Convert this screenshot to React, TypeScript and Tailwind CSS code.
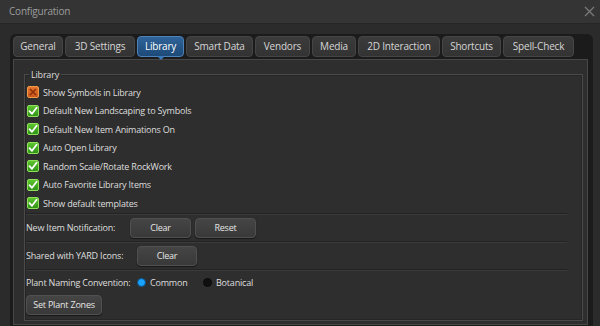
import React from 'react';

const tabs = [
  { label: 'General', w: 'w-[50px]' },
  { label: '3D Settings', w: 'w-[70px]' },
  { label: 'Library', w: 'w-[47px]', active: true },
  { label: 'Smart Data', w: 'w-[67px]' },
  { label: 'Vendors', w: 'w-[55px]' },
  { label: 'Media', w: 'w-[44px]' },
  { label: '2D Interaction', w: 'w-[82px]' },
  { label: 'Shortcuts', w: 'w-[59px]' },
  { label: 'Spell-Check', w: 'w-[71px]' },
];

const options = [
  { label: 'Show Symbols in Library', checked: false },
  { label: 'Default New Landscaping to Symbols', checked: true },
  { label: 'Default New Item Animations On', checked: true },
  { label: 'Auto Open Library', checked: true },
  { label: 'Random Scale/Rotate RockWork', checked: true },
  { label: 'Auto Favorite Library Items', checked: true },
  { label: 'Show default templates', checked: true },
];

function CheckBox({ checked }: { checked: boolean }) {
  if (!checked) {
    return (
      <div className="w-[12px] h-[12px] shrink-0 rounded-[2px] border border-[#f29a4a] bg-gradient-to-b from-[#e8762a] to-[#c9561a] flex items-center justify-center">
        <svg width="8" height="8" viewBox="0 0 8 8">
          <path d="M1 1 L7 7 M7 1 L1 7" stroke="#8a2f0c" strokeWidth="1.6" />
        </svg>
      </div>
    );
  }
  return (
    <div className="w-[12px] h-[12px] shrink-0 rounded-[2px] border border-[#8fe05a] bg-gradient-to-b from-[#5cc52e] to-[#2f9416] flex items-center justify-center">
      <svg width="10" height="10" viewBox="0 0 10 10">
        <path d="M1.5 5.2 L4 7.8 L8.6 1.8" stroke="#ffffff" strokeWidth="1.8" fill="none" strokeLinecap="round" strokeLinejoin="round" />
      </svg>
    </div>
  );
}

function Button({ children, w }: { children: React.ReactNode; w: string }) {
  return (
    <button className={`${w} h-[20px] whitespace-nowrap rounded-[4px] border border-[#505050] bg-gradient-to-b from-[#454545] to-[#393939] text-[#e6e6e6] shadow-[0_1px_1px_rgba(0,0,0,0.5)]`}>
      {children}
    </button>
  );
}

function Separator() {
  return <div className="h-[2px] mr-[14px] border-t border-[#232323] border-b border-b-[#3b3b3b]" />;
}

export default function App() {
  return (
    <div
      className="w-[600px] h-[326px] bg-[#2b2b2b] overflow-hidden text-[9px] tracking-[-0.2px] text-[#dedede] flex flex-col whitespace-nowrap"
      style={{ fontFamily: '"Open Sans", "Noto Sans", sans-serif' }}
    >
      <div className="h-[24px] shrink-0 bg-[#343434] flex items-center justify-between pl-[9px] pr-[5px] border-b border-[#262626]">
        <span className="text-[10px] text-[#9c9c9c]">Configuration</span>
        <svg width="11" height="11" viewBox="0 0 11 11">
          <path d="M1 1 L10 10 M10 1 L1 10" stroke="#7a7a7a" strokeWidth="1.3" />
        </svg>
      </div>

      <div className="flex-1 pl-[10px] pr-[7px] pt-[10px]">
        <div className="h-full bg-[#1b1b1b] rounded-t-[6px] pl-[3px] pr-[5px] pt-[2px]">
          <div className="flex gap-[2px] h-[21px] text-[10px]">
            {tabs.map((t) =>
              t.active ? (
                <div key={t.label} className={`${t.w} relative h-full rounded-[4px] border border-[#4f83b8] bg-gradient-to-b from-[#2f6399] to-[#1d4a78] text-white flex items-center justify-center`}>
                  {t.label}
                  <div className="absolute left-1/2 -translate-x-1/2 top-full w-0 h-0 border-l-[4px] border-r-[4px] border-t-[4px] border-l-transparent border-r-transparent border-t-[#3a78b8]" />
                </div>
              ) : (
                <div key={t.label} className={`${t.w} h-full rounded-[4px] border border-[#454545] bg-gradient-to-b from-[#3b3b3b] to-[#333333] text-[#d6d6d6] flex items-center justify-center`}>
                  {t.label}
                </div>
              )
            )}
          </div>

          <div className="mt-[2px] h-[266px] border border-[#474747] bg-[#2e2e2e] pl-[10px] pr-[4px] pt-[14px]">
            <div className="relative border border-[#4a4a4a] shadow-[inset_0_0_0_1px_#262626] h-[247px] pl-[1px] pt-[8px] pr-[1px]">
              <span className="absolute -top-[7px] left-[4px] px-[2px] bg-[#2e2e2e] text-[#dcdcdc]">Library</span>

              <div className="flex flex-col ml-[1px]">
                {options.map((o) => (
                  <div key={o.label} className="h-[18.5px] flex items-center gap-[4px]">
                    <CheckBox checked={o.checked} />
                    <span>{o.label}</span>
                  </div>
                ))}
              </div>

              <Separator />

              <div className="mt-[3px] h-[20px] flex items-center">
                <span className="w-[104px]">New Item Notification:</span>
                <div className="flex gap-[4px]">
                  <Button w="w-[61px]">Clear</Button>
                  <Button w="w-[61px]">Reset</Button>
                </div>
              </div>

              <div className="mt-[3px]">
                <Separator />
              </div>

              <div className="mt-[3px] h-[20px] flex items-center">
                <span className="w-[111px]">Shared with YARD Icons:</span>
                <Button w="w-[60px]">Clear</Button>
              </div>

              <div className="mt-[3px]">
                <Separator />
              </div>

              <div className="mt-[4px] h-[16px] flex items-center">
                <span className="w-[111px]">Plant Naming Convention:</span>
                <div className="flex items-center gap-[4px] w-[66px]">
                  <div className="w-[9px] h-[9px] rounded-full bg-[#19a3ff] border border-[#0b4d80]" />
                  <span>Common</span>
                </div>
                <div className="flex items-center gap-[4px]">
                  <div className="w-[9px] h-[9px] rounded-full bg-[#101010] border border-[#0a0a0a]" />
                  <span>Botanical</span>
                </div>
              </div>

              <div className="mt-[4px]">
                <Button w="w-[76px]">Set Plant Zones</Button>
              </div>
            </div>
          </div>
        </div>
      </div>
    </div>
  );
}
